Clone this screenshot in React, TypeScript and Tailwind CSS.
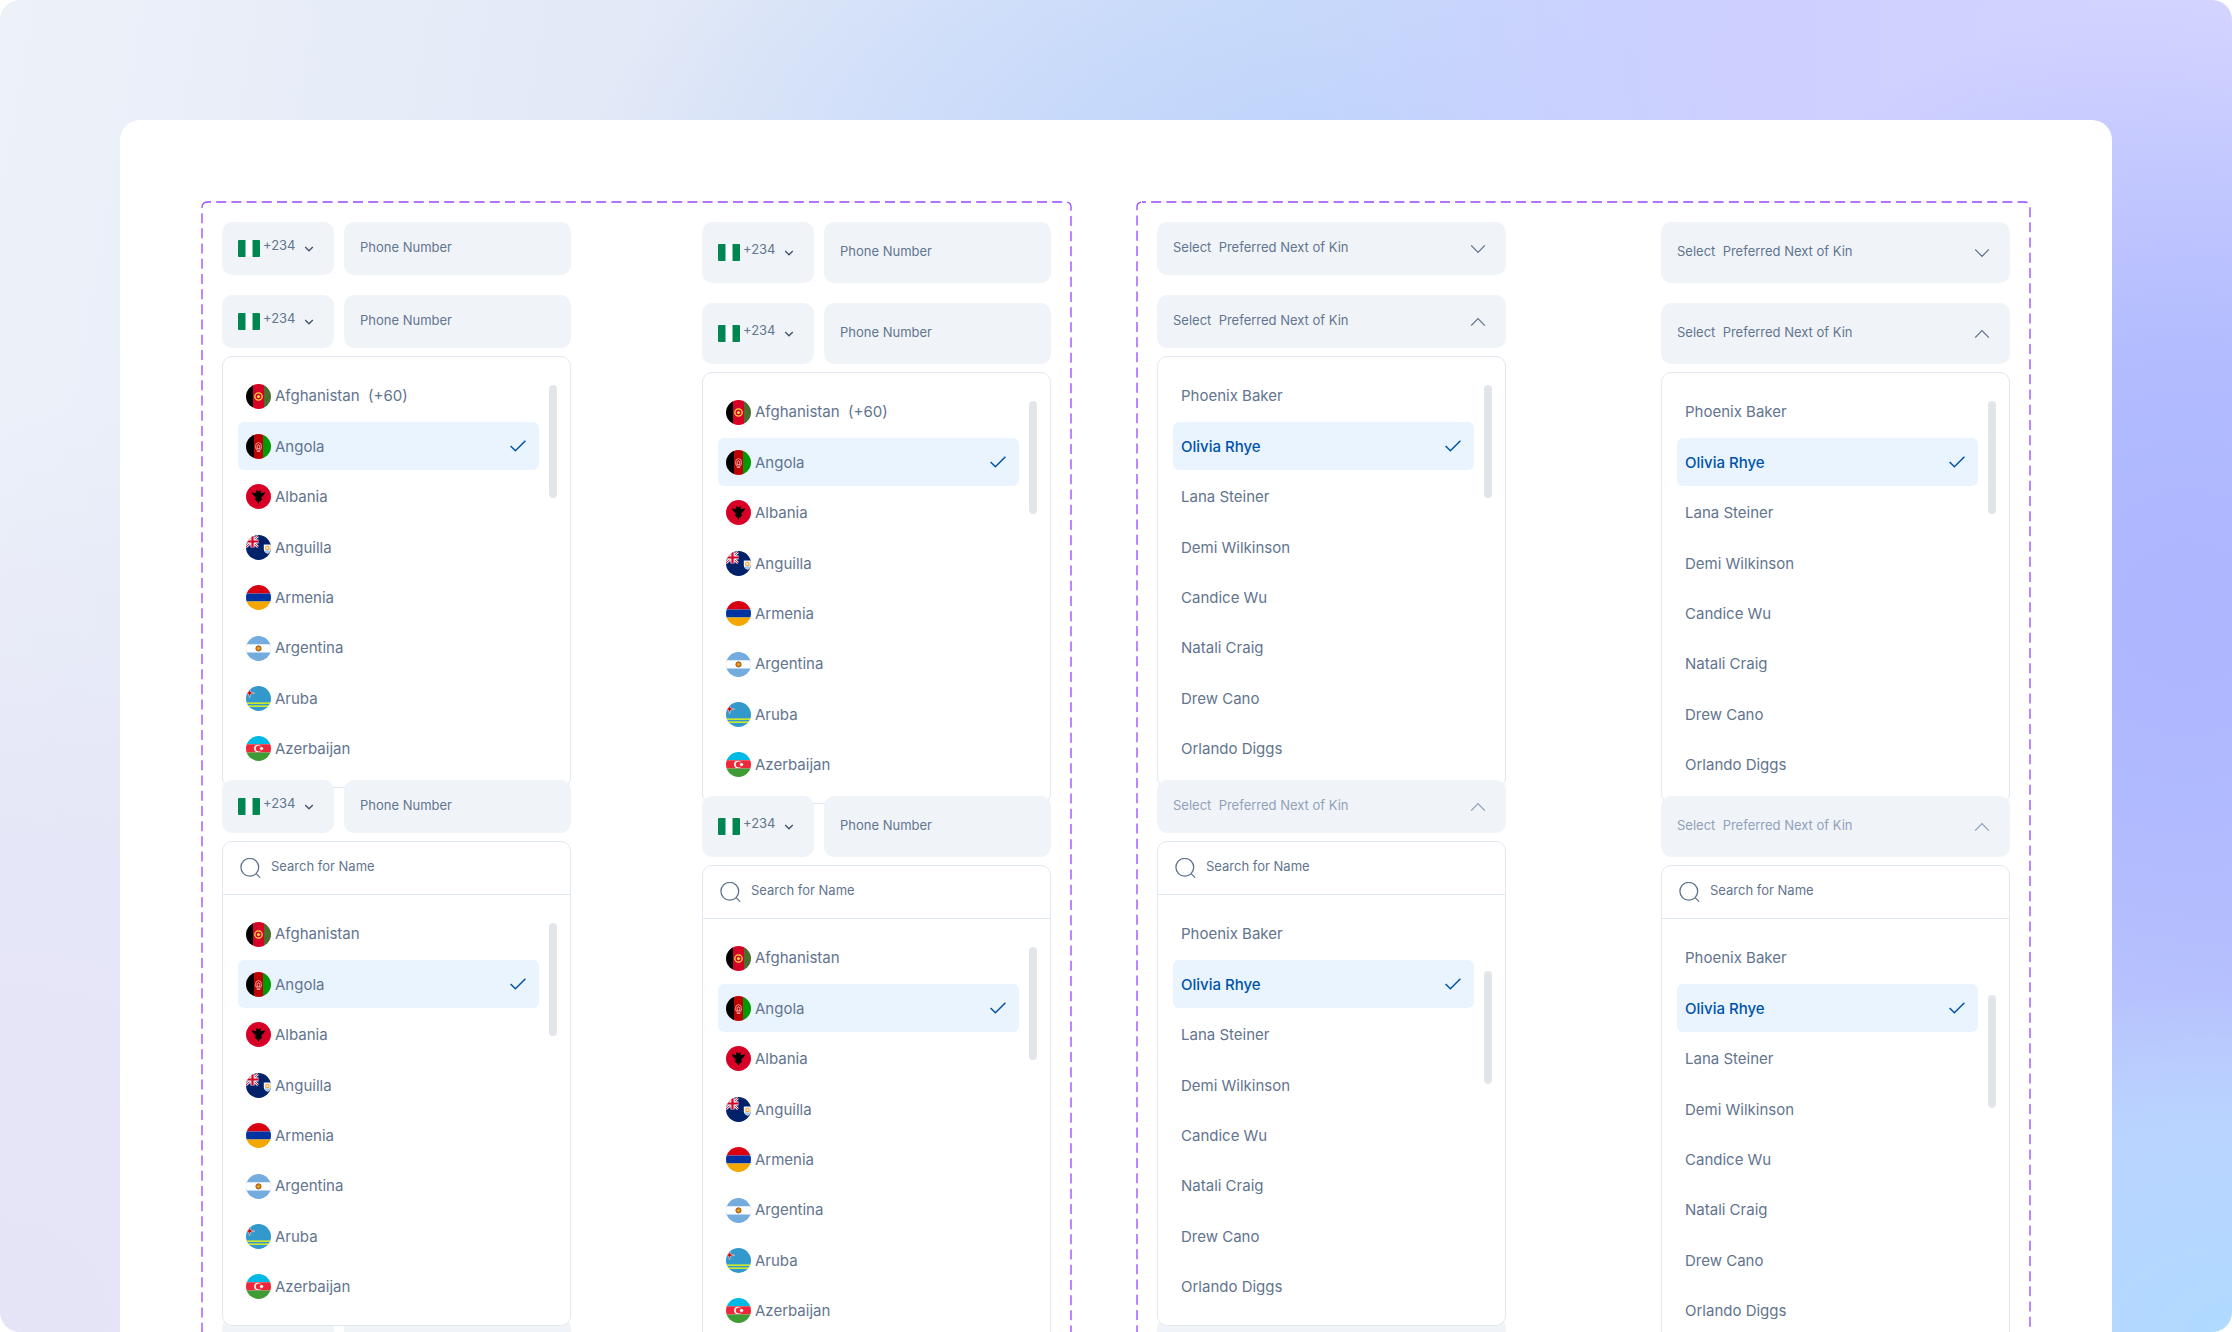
import type { ReactNode } from "react";
import clsx from "clsx";

type Size = "compact" | "regular";

type Option = {
  name: string;
  flag?: ReactNode;
};

function Flag({ children }: { children: ReactNode }) {
  return (
    <svg viewBox="0 0 25 25" aria-hidden="true" className="size-[25px] shrink-0 rounded-full">
      {children}
    </svg>
  );
}

const COUNTRIES: Option[] = [
  {
    name: "Afghanistan",
    flag: (
      <Flag>
        <path fill="#000" d="M0 0h7v25H0z" />
        <path fill="#D80027" d="M7 0h11v25H7z" />
        <path fill="#496E2D" d="M18 0h7v25h-7z" />
        <circle cx="12.5" cy="12.5" r="3.7" fill="none" stroke="#FFDA44" strokeWidth="1.3" />
        <circle cx="12.5" cy="12.5" r="1.5" fill="#FFDA44" />
      </Flag>
    ),
  },
  {
    name: "Angola",
    flag: (
      <Flag>
        <path fill="#000" d="M0 0h8v25H0z" />
        <path fill="#BF0000" d="M8 0h9v25H8z" />
        <path fill="#090" d="M17 0h8v25h-8z" />
        <ellipse cx="12.5" cy="12.6" rx="3" ry="4" fill="none" stroke="#F3B9B9" strokeWidth=".8" />
        <path
          fill="none"
          stroke="#F9DADA"
          strokeWidth=".8"
          d="M11.2 14.8v-2.6l1.3-1.6 1.3 1.6v2.6zM10.8 17.4h3.4"
        />
      </Flag>
    ),
  },
  {
    name: "Albania",
    flag: (
      <Flag>
        <path fill="#D80027" d="M0 0h25v25H0z" />
        <path
          fill="#000"
          d="M9.6 7.2 11 6.2l1.5 1.2L14 6.2l1.4 1-.8.8.4 1.2 4.3-1-1.5 3-1.9.8.8.9-1.8.7 1.6 2.6-1.7-.4.2 1.8-1.3-.5-1.2 3-1.2-3-1.3.5.2-1.8-1.7.4 1.6-2.6-1.8-.7.8-.9-1.9-.8-1.5-3 4.3 1 .4-1.2z"
        />
      </Flag>
    ),
  },
  {
    name: "Anguilla",
    flag: (
      <Flag>
        <path fill="#012169" d="M0 0h25v25H0z" />
        <path stroke="#fff" strokeWidth="2.4" d="m0 1 12 11M12 1 0 12" />
        <path stroke="#D80027" strokeWidth="1" d="m0 1 12 11M12 1 0 12" />
        <path stroke="#fff" strokeWidth="4" d="M6.5 0v12.5M0 6.5h12.5" />
        <path stroke="#D80027" strokeWidth="2.2" d="M6.5 0v12.5M0 6.5h12.5" />
        <path fill="#F3F3F0" d="M17.8 9.5H25v4.8c0 2.2-1.4 3.6-3.4 4.4-2.3-.8-3.8-2.2-3.8-4.4z" />
        <path fill="#9CCBE8" d="M18.3 15.4h6.2c-.5 1.4-1.5 2.2-2.9 2.8-1.6-.6-2.8-1.4-3.3-2.8z" />
        <circle cx="21.4" cy="12.9" r="1.7" fill="none" stroke="#F5A623" strokeWidth="1.1" />
      </Flag>
    ),
  },
  {
    name: "Armenia",
    flag: (
      <Flag>
        <path fill="#D90012" d="M0 0h25v8.5H0z" />
        <path fill="#0033A0" d="M0 8.5h25v8H0z" />
        <path fill="#F2A800" d="M0 16.5h25V25H0z" />
      </Flag>
    ),
  },
  {
    name: "Argentina",
    flag: (
      <Flag>
        <path fill="#74ACDF" d="M0 0h25v25H0z" />
        <path fill="#fff" d="M0 8.3h25v8.2H0z" />
        <circle cx="12.5" cy="12.4" r="2.6" fill="#D9870F" stroke="#9A5A2A" strokeWidth="1" />
        <circle cx="12.5" cy="12.4" r="1" fill="#F6B40E" />
      </Flag>
    ),
  },
  {
    name: "Aruba",
    flag: (
      <Flag>
        <path fill="#39C" d="M0 0h25v25H0z" />
        <path fill="#FF0" d="M0 16.6h25v1.2H0zM0 19.6h25v1.2H0z" />
        <path
          fill="#C00"
          stroke="#fff"
          strokeWidth=".5"
          d="m3.6 3.2 1 2.9 4 1-4 1-1 3.6-1-3.6-2.6-1 2.6-1z"
        />
      </Flag>
    ),
  },
  {
    name: "Azerbaijan",
    flag: (
      <Flag>
        <path fill="#00B9E4" d="M0 0h25v8.3H0z" />
        <path fill="#ED2939" d="M0 8.3h25v8.2H0z" />
        <path fill="#3F9C35" d="M0 16.5h25V25H0z" />
        <circle cx="11.8" cy="12.4" r="3.7" fill="#fff" />
        <circle cx="12.8" cy="12.4" r="3" fill="#ED2939" />
        <path
          fill="#fff"
          d="m15.6 10.4.5 1 1-.3-.3 1 1 .4-1 .4.3 1-1-.3-.5 1-.5-1-1 .3.3-1-1-.4 1-.4-.3-1 1 .3z"
        />
      </Flag>
    ),
  },
];

const PEOPLE: Option[] = [
  { name: "Phoenix Baker" },
  { name: "Olivia Rhye" },
  { name: "Lana Steiner" },
  { name: "Demi Wilkinson" },
  { name: "Candice Wu" },
  { name: "Natali Craig" },
  { name: "Drew Cano" },
  { name: "Orlando Diggs" },
];

const fieldHeight: Record<Size, string> = {
  compact: "h-[53px]",
  regular: "h-[61px]",
};

function NigeriaFlag() {
  return (
    <svg viewBox="0 0 22 17" aria-hidden="true" className="h-[17px] w-[22px] shrink-0 rounded-[1px]">
      <path fill="#fff" d="M0 0h22v17H0z" />
      <path fill="#008751" d="M0 0h7.5v17H0zM14.5 0H22v17h-7.5z" />
    </svg>
  );
}

function PhoneField({ size }: { size: Size }) {
  return (
    <div className={clsx("flex gap-2.5", fieldHeight[size])}>
      <div className="relative flex w-28 shrink-0 items-center rounded-[10px] bg-[#f0f4f9] pl-4">
        <NigeriaFlag />
        <select
          aria-label="Country code"
          className="h-full w-[60px] appearance-none bg-transparent pb-1.5 pl-[3px] text-[13px] text-slate-500 outline-none"
        >
          <option>+234</option>
        </select>
        <svg
          viewBox="0 0 10 6"
          aria-hidden="true"
          className="pointer-events-none absolute right-5 h-[6px] w-[10px] fill-none stroke-slate-600 stroke-[1.4]"
        >
          <path d="m1.2 1 3.8 3.8L8.8 1" />
        </svg>
      </div>
      <input
        type="tel"
        aria-label="Phone Number"
        placeholder="Phone Number"
        className="min-w-0 flex-1 rounded-[10px] bg-[#f0f4f9] px-4 pb-px text-[13px] text-slate-500 outline-none placeholder:text-slate-500"
      />
    </div>
  );
}

interface KinFieldProps {
  size: Size;
  open?: boolean;
  muted?: boolean;
}

function KinField({ size, open, muted }: KinFieldProps) {
  return (
    <div
      className={clsx(
        "relative flex items-center rounded-[10px] bg-[#f0f4f9]",
        muted ? "text-slate-400" : "text-slate-500",
        fieldHeight[size],
      )}
    >
      <select
        aria-label="Preferred Next of Kin"
        className="h-full w-full appearance-none bg-transparent px-4 pb-px text-[13px] outline-none"
      >
        <option>{"Select\u00a0 Preferred Next of Kin"}</option>
      </select>
      <svg
        viewBox="0 0 16 10"
        aria-hidden="true"
        className="pointer-events-none absolute right-5 h-[10px] w-[16px] fill-none stroke-current stroke-[1.3]"
      >
        <path d={open ? "m1.2 8.6 6.8-7 6.8 7" : "m1.2 1.4 6.8 7 6.8-7"} />
      </svg>
    </div>
  );
}

interface OptionPanelProps {
  options: Option[];
  label: string;
  search?: boolean;
  dialCode?: string;
  scrolled?: boolean;
}

function OptionPanel({ options, label, search, dialCode, scrolled }: OptionPanelProps) {
  return (
    <div
      className={clsx(
        "rounded-[10px] border border-[#e2e8f0] bg-white",
        search && "relative z-10",
      )}
    >
      {search && (
        <label className="flex h-[53px] items-center gap-2.5 border-b border-[#e2e8f0] pl-[17px]">
          <svg
            viewBox="0 0 21 21"
            aria-hidden="true"
            className="size-[21px] shrink-0 fill-none stroke-slate-500 stroke-[1.3]"
          >
            <circle cx="9.8" cy="9.3" r="8.9" />
            <path d="m16.1 15.6 4 4" />
          </svg>
          <input
            type="search"
            aria-label="Search for Name"
            placeholder="Search for Name"
            className="h-full min-w-0 flex-1 bg-transparent pb-1 text-[13px] outline-none placeholder:text-slate-500"
          />
        </label>
      )}
      <div className="flex gap-2.5 pt-[15px] pr-[13px] pb-3.5 pl-[15px]">
        <ul
          role="listbox"
          aria-label={label}
          className="flex h-[401px] flex-1 flex-col justify-between"
        >
          {options.map(({ name, flag }, index) => {
            const selected = index === 1;
            return (
              <li
                key={name}
                role="option"
                aria-selected={selected}
                className={clsx(
                  "flex h-12 items-center gap-1 rounded-md pr-[13px] pl-2 text-[15px]",
                  selected && "bg-[#e9f4ff]",
                  selected && !flag ? "font-medium text-[#0052a8]" : "text-slate-500",
                )}
              >
                {flag}
                <span className="flex-1 pt-px whitespace-pre">
                  {name}
                  {dialCode && index === 0 && `  ${dialCode}`}
                </span>
                {selected && (
                  <svg
                    viewBox="0 0 16 12"
                    aria-hidden="true"
                    className="h-3 w-4 fill-none stroke-[#0052a8] stroke-[1.5]"
                  >
                    <path d="m.6 6 4.8 4.8L15.4.8" />
                  </svg>
                )}
              </li>
            );
          })}
        </ul>
        <div
          className={clsx(
            "h-[113px] w-2 rounded-full bg-[#e2e6eb]",
            scrolled ? "mt-[61px]" : "mt-[13px]",
          )}
        />
      </div>
    </div>
  );
}

function PhoneColumn({ size }: { size: Size }) {
  return (
    <div className="flex w-[349px] flex-col">
      <PhoneField size={size} />
      <div className="mt-5 mb-2">
        <PhoneField size={size} />
      </div>
      <OptionPanel options={COUNTRIES} label="Countries" dialCode="(+60)" />
      <div className="relative -mt-2 mb-2">
        <PhoneField size={size} />
      </div>
      <OptionPanel options={COUNTRIES} label="Countries" search />
      {size === "compact" && (
        <div className="-mt-2 flex h-[53px] gap-2.5">
          <div className="w-28 rounded-[10px] bg-[#f0f4f9]" />
          <div className="flex-1 rounded-[10px] bg-[#f0f4f9]" />
        </div>
      )}
    </div>
  );
}

function KinColumn({ size }: { size: Size }) {
  return (
    <div className="flex w-[349px] flex-col">
      <KinField size={size} />
      <div className="mt-5 mb-2">
        <KinField size={size} open />
      </div>
      <OptionPanel options={PEOPLE} label="Next of kin" />
      <div className="relative -mt-2 mb-2">
        <KinField size={size} open muted />
      </div>
      <OptionPanel options={PEOPLE} label="Next of kin" search scrolled />
      {size === "compact" && (
        <div className="-mt-2 h-[53px] rounded-[10px] bg-[#f0f4f9] px-4 pt-2.5 text-[10px] leading-4 text-slate-400">
          Next of Kin
        </div>
      )}
    </div>
  );
}

function VariantFrame({ children }: { children: ReactNode }) {
  return (
    <section className="relative flex justify-between p-[21px]">
      <div className="pointer-events-none absolute inset-px">
        <svg aria-hidden="true" className="size-full overflow-visible">
          <rect
            width="100%"
            height="100%"
            rx="5"
            fill="none"
            stroke="#9747FF"
            strokeWidth="1.3"
            strokeDasharray="10 5.2"
            strokeDashoffset="6"
          />
        </svg>
      </div>
      {children}
    </section>
  );
}

export default function App() {
  return (
    <main className="h-screen overflow-hidden rounded-[20px] bg-[#e6e9f7] bg-[radial-gradient(ellipse_22%_26%_at_100%_100%,#b0daff_0%,#b9d4ff_60%,transparent_100%),radial-gradient(ellipse_26%_46%_at_98%_46%,#adb6fe_0%,#b1bbfe_40%,transparent_100%),radial-gradient(ellipse_42%_60%_at_100%_4%,#d4d4ff_0%,#cccfff_55%,transparent_100%),radial-gradient(ellipse_34%_28%_at_60%_14%,#bdd3fc_0%,transparent_100%),radial-gradient(ellipse_40%_70%_at_0%_100%,#e5e4f7_0%,#e5e6f7_50%,transparent_100%),linear-gradient(100deg,#edf2f9_0%,#e1e8f7_28%,#d3e1f8_50%,#bcc8fe_100%)] px-[120px] pt-[120px] font-[Inter,'Liberation_Sans',sans-serif]">
      <div className="grid grid-cols-[871fr_895fr] gap-[64px] rounded-t-[20px] bg-white px-[81px] pt-[81px] pb-20">
        <VariantFrame>
          <PhoneColumn size="compact" />
          <PhoneColumn size="regular" />
        </VariantFrame>
        <VariantFrame>
          <KinColumn size="compact" />
          <KinColumn size="regular" />
        </VariantFrame>
      </div>
    </main>
  );
}
